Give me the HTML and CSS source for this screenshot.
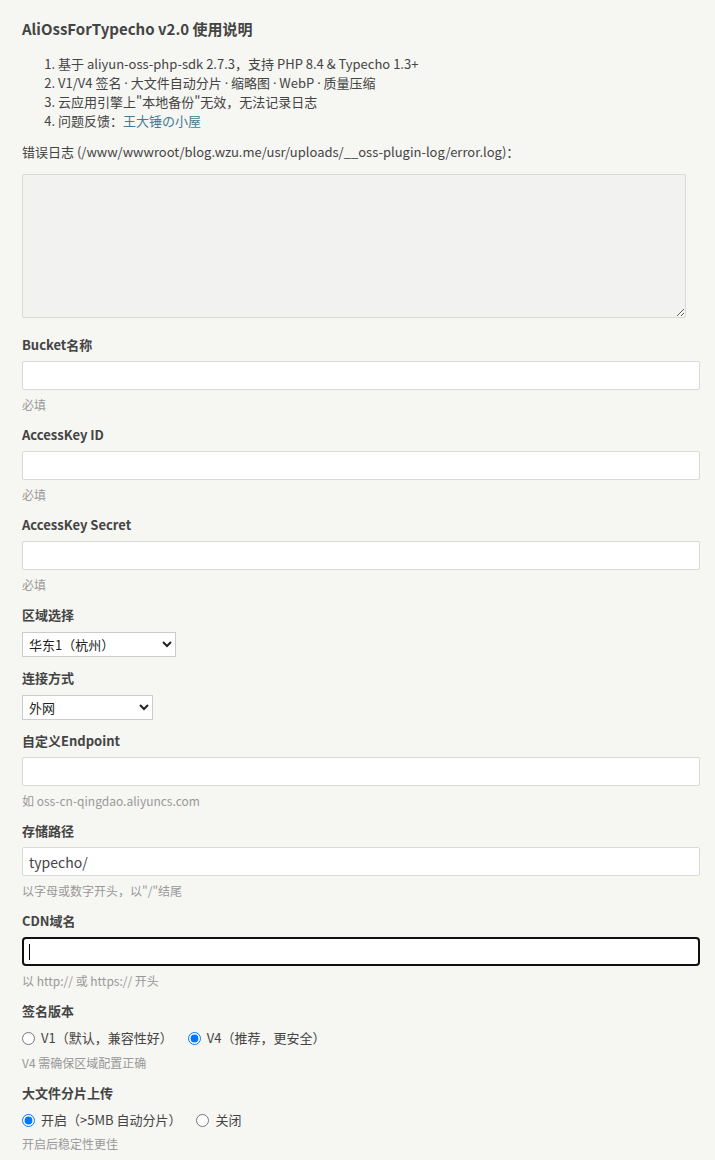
FILE: index.html
```html
<!DOCTYPE html>
<html lang="zh">
<head>
    <meta charset="UTF-8">
    <meta name="viewport" content="width=device-width, initial-scale=1.0">
    <title>AliOssForTypecho 设置</title>
    <link rel="stylesheet" href="styles.css">
</head>
<body>
    <div class="page">
        <h2 class="intro-title">AliOssForTypecho v2.0 使用说明</h2>
        <ol class="intro-list">
            <li>基于 aliyun-oss-php-sdk 2.7.3，支持 PHP 8.4 &amp; Typecho 1.3+</li>
            <li>V1/V4 签名 <span class="dot">·</span> 大文件自动分片 <span class="dot">·</span> 缩略图 <span class="dot">·</span> WebP <span class="dot">·</span> 质量压缩</li>
            <li>云应用引擎上"本地备份"无效，无法记录日志</li>
            <li>问题反馈：<a href="#" class="link">王大锤の小屋</a></li>
        </ol>
        <p class="log-label">错误日志 (/www/wwwroot/blog.wzu.me/usr/uploads/__oss-plugin-log/error.log)：</p>
        <textarea class="log-box" readonly></textarea>

        <ul class="options">
            <li class="option">
                <label class="option-label" for="bucket">Bucket名称</label>
                <input type="text" class="text" id="bucket">
                <p class="description">必填</p>
            </li>
            <li class="option">
                <label class="option-label" for="akid">AccessKey ID</label>
                <input type="text" class="text" id="akid">
                <p class="description">必填</p>
            </li>
            <li class="option">
                <label class="option-label" for="aksecret">AccessKey Secret</label>
                <input type="text" class="text" id="aksecret">
                <p class="description">必填</p>
            </li>
            <li class="option">
                <label class="option-label" for="region">区域选择</label>
                <select id="region" class="select region-select">
                    <option>华东1（杭州）</option>
                </select>
            </li>
            <li class="option">
                <label class="option-label" for="network">连接方式</label>
                <select id="network" class="select network-select">
                    <option>外网</option>
                </select>
            </li>
            <li class="option">
                <label class="option-label" for="endpoint">自定义Endpoint</label>
                <input type="text" class="text" id="endpoint">
                <p class="description">如 oss-cn-qingdao.aliyuncs.com</p>
            </li>
            <li class="option">
                <label class="option-label" for="path">存储路径</label>
                <input type="text" class="text" id="path" value="typecho/">
                <p class="description">以字母或数字开头，以"/"结尾</p>
            </li>
            <li class="option">
                <label class="option-label" for="cdn">CDN域名</label>
                <div class="focus-wrap">
                    <input type="text" class="text text-focused" id="cdn">
                    <span class="caret"></span>
                </div>
                <p class="description">以 http:// 或 https:// 开头</p>
            </li>
            <li class="option">
                <label class="option-label">签名版本</label>
                <div class="radio-row">
                    <label class="radio"><input type="radio" name="sign">V1（默认，兼容性好）</label>
                    <label class="radio"><input type="radio" name="sign" checked>V4（推荐，更安全）</label>
                </div>
                <p class="description">V4 需确保区域配置正确</p>
            </li>
            <li class="option">
                <label class="option-label">大文件分片上传</label>
                <div class="radio-row">
                    <label class="radio"><input type="radio" name="multipart" checked>开启（&gt;5MB 自动分片）</label>
                    <label class="radio"><input type="radio" name="multipart">关闭</label>
                </div>
                <p class="description">开启后稳定性更佳</p>
            </li>
        </ul>
    </div>
</body>
</html>
```

FILE: styles.css
```css
:root {
    --bg: #F6F6F3;
    --text: #444444;
    --muted: #999999;
    --link: #467B96;
    --border: #D9D9D6;
}

body {
    margin: 0;
    background: var(--bg);
    color: var(--text);
    font-family: "Noto Sans CJK SC", "Noto Sans", sans-serif;
    font-size: 13px;
}

.page {
    padding: 19px 15px 20px 22px;
}

.intro-title {
    margin: 0;
    font: 700 15px/20px "Noto Sans CJK SC", "Noto Sans", sans-serif;
}

.intro-list {
    margin: 15px 0 0;
    padding-left: 36px;
    line-height: 19px;
}

/* 中点用西文字体，避免全角宽度 */
.dot {
    font-family: "Noto Sans", sans-serif;
    line-height: 0;
}

.link {
    color: var(--link);
    text-decoration: none;
}

.log-label {
    margin: 12px 0 0;
    line-height: 19px;
}

.log-box {
    display: block;
    box-sizing: border-box;
    width: 664px;
    height: 144px;
    margin-top: 13px;
    background: #F2F2F1;
    border: 1px solid var(--border);
    border-radius: 2px;
}

/* 选项列表 */
.options {
    list-style: none;
    margin: 17px 0 0;
    padding: 0;
}

.option {
    margin-bottom: 11px;
}

.option-label {
    display: block;
    margin-bottom: 6px;
    font-weight: 700;
    line-height: 20px;
}

.text {
    display: block;
    box-sizing: border-box;
    width: 100%;
    height: 29px;
    padding: 0 6px;
    background: #FFFFFF;
    border: 1px solid var(--border);
    border-radius: 2px;
    color: var(--text);
    font: 400 14px "Noto Sans CJK SC", "Noto Sans", sans-serif;
}

.text-focused {
    border: 2px solid #101010;
    border-radius: 4px;
    outline: none;
}

.focus-wrap {
    position: relative;
}

.caret {
    position: absolute;
    left: 7px;
    top: 7px;
    width: 1px;
    height: 16px;
    background: #000000;
}

.description {
    margin: 6px 0 0;
    color: var(--muted);
    font-size: 12px;
    line-height: 18px;
}

.select {
    display: block;
    box-sizing: border-box;
    height: 25px;
    margin-top: 7px;
    padding: 0 2px;
    background: #FFFFFF;
    border: 1px solid #CCCCCC;
    border-radius: 0;
    color: #222222;
    font: 400 13px "Noto Sans CJK SC", "Noto Sans", sans-serif;
}

.region-select {
    width: 154px;
}

.network-select {
    width: 131px;
}

.radio-row {
    display: flex;
    gap: 15px;
    margin-top: 7px;
    line-height: 20px;
}

.radio {
    display: flex;
    align-items: center;
    font-size: 13px;
}

.radio input {
    margin: 0 6px 0 0;
}

.option:last-child .description {
    margin-top: 5px;
}
```
